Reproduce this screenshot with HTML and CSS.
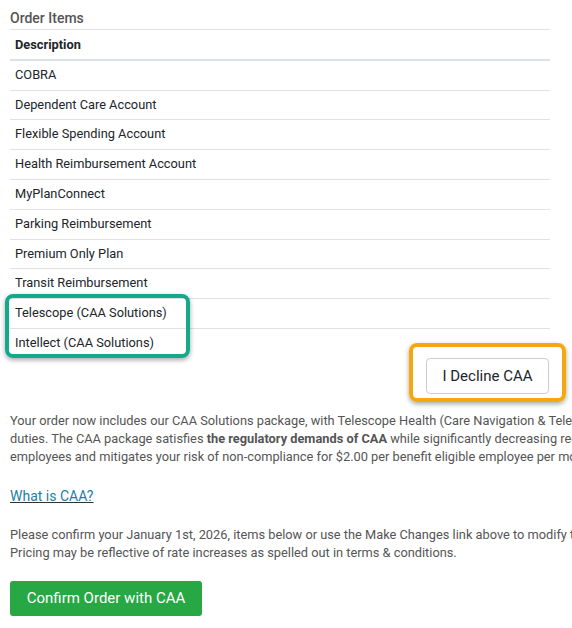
FILE: index.html
```html
<!DOCTYPE html>
<html>
<head>
<meta charset="utf-8">
<link rel="stylesheet" href="styles.css">
</head>
<body>
<div class="page">
  <h3 class="title">Order Items</h3>
  <div class="table-wrap">
    <table class="items">
      <thead><tr><th>Description</th></tr></thead>
      <tbody>
        <tr><td>COBRA</td></tr>
        <tr><td>Dependent Care Account</td></tr>
        <tr><td>Flexible Spending Account</td></tr>
        <tr><td>Health Reimbursement Account</td></tr>
        <tr><td>MyPlanConnect</td></tr>
        <tr><td>Parking Reimbursement</td></tr>
        <tr><td>Premium Only Plan</td></tr>
        <tr><td>Transit Reimbursement</td></tr>
        <tr><td>Telescope (CAA Solutions)</td></tr>
        <tr><td>Intellect (CAA Solutions)</td></tr>
      </tbody>
    </table>
    <div class="teal-box"></div>
  </div>
  <div class="decline-row">
    <button class="btn-decline">I Decline CAA</button>
  </div>
  <p class="text">Your order now includes our CAA Solutions package, with Telescope Health (Care Navigation &amp; Telehealth) and Intellect (EAP) fulfilling your fiduciary<br>duties. The CAA package satisfies <b>the regulatory demands of CAA</b> while significantly decreasing regulatory burden and providing valuable services to your<br>employees and mitigates your risk of non-compliance for $2.00 per benefit eligible employee per month.</p>
  <p class="link-line"><a class="link" href="#">What is CAA?</a></p>
  <p class="text">Please confirm your January 1st, 2026, items below or use the Make Changes link above to modify the order.<br>Pricing may be reflective of rate increases as spelled out in terms &amp; conditions.</p>
  <button class="btn-confirm">Confirm Order with CAA</button>
</div>
</body>
</html>
```
FILE: styles.css
```css
html, body {
  margin: 0;
  padding: 0;
  background: #fff;
  overflow: hidden;
}
body {
  font-family: Roboto, "Liberation Sans", sans-serif;
  color: #212529;
}
.page {
  padding: 10px 0 0 10px;
  width: 900px;
}
.title {
  margin: 0 0 2px 0;
  font-size: 14px;
  font-weight: 500;
  line-height: 17px;
  color: #555;
}
.table-wrap {
  position: relative;
  width: 540px;
}
.items {
  width: 540px;
  border-collapse: collapse;
  font-size: 12.8px;
}
.items th, .items td {
  text-align: left;
  padding: 7px 5px;
  line-height: 14.8px;
  border-top: 1px solid #dee2e6;
}
.items th {
  font-weight: 700;
  border-bottom: 2px solid #dee2e6;
  padding: 8px 5px 6px;
}
.items thead + tbody tr:first-child td {
  border-top: 0;
}
.teal-box {
  position: absolute;
  left: -5px;
  top: 265px;
  width: 177px;
  height: 56px;
  border: 4px solid #13a98a;
  border-radius: 8px;
  box-shadow: 0 2px 5px rgba(0, 0, 0, 0.35);
  pointer-events: none;
}
.decline-row {
  width: 540px;
  display: flex;
  justify-content: flex-end;
  margin-top: 0;
}
.btn-decline {
  position: relative;
  width: 123px;
  height: 36px;
  background: #fff;
  border: 1px solid #ccc;
  border-radius: 4px;
  font-family: Roboto, "Liberation Sans", sans-serif;
  font-size: 15px;
  color: #212529;
  margin-right: 1px;
}
.btn-decline::after {
  content: "";
  position: absolute;
  left: -18px;
  right: -18px;
  top: -16px;
  bottom: -9px;
  border: 4px solid #f5a80d;
  border-radius: 8px;
  box-shadow: 0 2px 5px rgba(0, 0, 0, 0.35);
}
.text {
  margin: 18px 0 0 0;
  font-size: 12.8px;
  line-height: 18px;
  color: #555;
  white-space: nowrap;
}
.link-line {
  margin: 21px 0 0 0;
  font-size: 14px;
  line-height: 18px;
}
.link {
  color: #1a7fa5;
  text-decoration: underline;
  text-decoration-color: #333;
}
.link-line + .text {
  margin-top: 21px;
}
.btn-confirm {
  display: block;
  margin-top: 19px;
  width: 192px;
  height: 35px;
  background: #28a745;
  border: 0;
  border-radius: 3px;
  color: #fff;
  font-family: Roboto, "Liberation Sans", sans-serif;
  font-size: 15px;
}
```
